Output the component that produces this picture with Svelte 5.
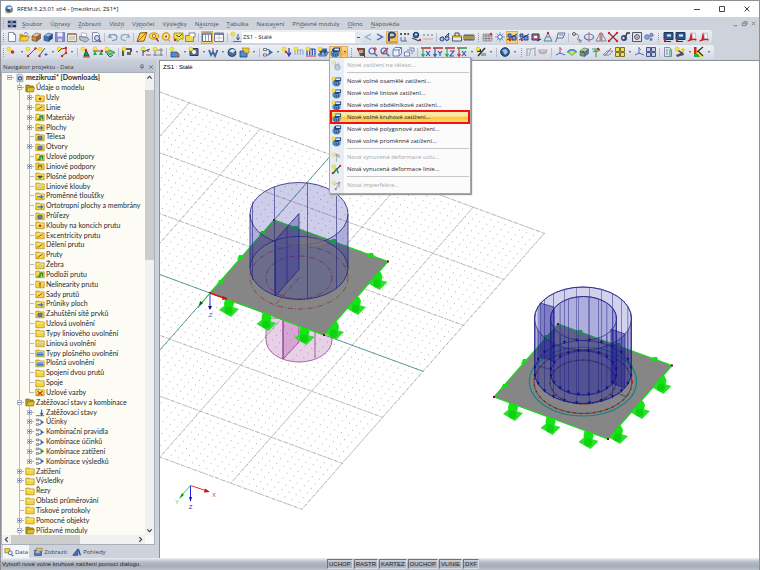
<script>
  // Icon artwork, drawn on a 12 x 12 grid.
  const star = '<circle cx="3" cy="3" r="2" fill="#f6ea3c" stroke="#c9b423" stroke-width=".5"/>';
  const lens = '<circle cx="5" cy="5" r="3" fill="#dfe9fb" stroke="#4a62b8" stroke-width="1.2"/><path d="M7.3 7.3l3 3" stroke="#6a6a80" stroke-width="1.6"/>';
  const red = (x, y) => `<circle cx="${x}" cy="${y}" r="1.2" fill="#d22"/>`;
  const cube = (a, b, c) => `<path d="M2 5l4-3 4.500 1-4 3z" fill="${a}"/><path d="M2 5l4.500 1v4.500L2 9.500z" fill="${b}"/><path d="M6.500 6l4-3v4.500l-4 3z" fill="${c}"/><path d="M2 5l4-3 4.500 1v4.500l-4 3L2 9.500zM2 5l4.500 1v4.500M6.500 6l4-3" fill="none" stroke="#333a55" stroke-width=".5"/>`;
  const load = '<path d="M2 6l1.500-1.500h6L10 6v3l-2 2H4L2 9z" fill="#5b9bd6" stroke="#2d5f9c" stroke-width=".5"/><path d="M3 3.500l2-2h6v4H9L8 6.500H4z" fill="#27477c"/><path d="M5.500 2.600h4.500v1.700H5.500z" fill="#eef3fb"/><path d="M4.200 7v3M6.200 7.500V10.500M8.200 7v3" stroke="#1b3868" stroke-width=".8"/>';
  const sheet = (c) => `<path d="M2.500 1.500h5l2 2v7h-7z" fill="${c}" stroke="#6b7890" stroke-width=".8"/>`;
  const axis = (c1, c2, d) => `<path d="M1 2h10" stroke="${c2}" stroke-width="1.600"/><path d="M3 2v8M1.500 8L3 10.500 4.500 8" stroke="${c1}" stroke-width="1.100" fill="none"/><path d="${d}" stroke="#3450a8" stroke-width="1.100" fill="none"/>`;
  const art = {
    orb: '<circle cx="6" cy="6" r="4.600" fill="#5f7fa8"/><path d="M3 5l3-2 4 1-3 3z" fill="#cfe2f5"/><path d="M3 5l4 2v3.500L3 8z" fill="#2e4c7d"/><path d="M1 9c2 2.500 7 2.500 10-1" stroke="#b8a238" stroke-width="1.200" fill="none"/>',
    flag: '<path d="M1 2h10v8H1z" fill="#27366f"/><path d="M0 6h12M5.500 1v10" stroke="#fff" stroke-width="1.800"/><path d="M0 6h12M5.500 1v10" stroke="#27366f" stroke-width=".7"/>',
    doc: sheet('#fff') + '<path d="M7.500 1.500v2h2" fill="none" stroke="#6b7890" stroke-width=".7"/>',
    open: '<path d="M1.500 3h3l1 1h4v6h-8z" fill="#c9a21c"/><path d="M1.500 10l2-4.500h8L9.500 10z" fill="#f3cf3d" stroke="#a27d10" stroke-width=".6"/><path d="M6 2.500c2-1.500 3-1 4 1" stroke="#4b79b8" fill="none"/>',
    cubeO: cube('#f3c27b', '#d88b2f', '#a8601b'),
    cubeB: cube('#8fb9ec', '#3a74c8', '#1f479a'),
    save: '<path d="M1.500 1.500h9v9h-9z" fill="#8a8ccf" stroke="#6465b0" stroke-width=".7"/><path d="M3.500 1.500h5v4h-5z" fill="#f2f3ff"/><path d="M4 7.500h4v3H4z" fill="#d4d6e8"/>',
    report: '<path d="M1.500 3h9v7.500h-9z" fill="#f2e9d8" stroke="#7b6a58" stroke-width=".8"/><path d="M1.500 2h9v2h-9z" fill="#a58d74"/><path d="M3 6h6M3 8h6" stroke="#a9a297" stroke-width=".7"/>',
    print: '<path d="M4 1.500l5 1.500-1 3-5-1z" fill="#fff" stroke="#8a93a8" stroke-width=".6"/><path d="M1.500 5.500l8 1 1.500 2-3 2.500-6-2z" fill="#b8c0cf" stroke="#5e6a85" stroke-width=".7"/>',
    preview: sheet('#f4f7fc') + '<circle cx="7" cy="7" r="2.500" fill="#cfe0f6" stroke="#3a5fa8"/><path d="M9 9l2 2" stroke="#7a5530" stroke-width="1.500"/>',
    undo: '<path d="M3 3L1.500 6 5 6.500M2 5.800C4 2.500 10 3 10 6.500c0 2-2 3-5 3" fill="none" stroke="#7d93bb" stroke-width="1.100"/>',
    redo: '<path d="M9 3l1.500 3L7 6.500M10 5.800C8 2.500 2 3 2 6.500c0 2 2 3 5 3" fill="none" stroke="#8fa2c4" stroke-width="1.100"/>',
    plate: '<path d="M4 2l7-.5L8 10l-7 .5z" fill="#f1df2b" stroke="#8c5a17" stroke-width="1"/><path d="M2 10l8-8" stroke="#c33" stroke-width=".8"/>',
    eyeY: '<ellipse cx="6" cy="5" rx="5" ry="3.200" fill="#f7e23a" stroke="#a88a18" stroke-width=".8"/><circle cx="6" cy="5" r="1.600" fill="#fff" stroke="#b33" stroke-width=".8"/><path d="M8 7l2.500 3.500" stroke="#a33" stroke-width="1.300"/>',
    ring: '<circle cx="6" cy="5.500" r="3.400" fill="#fff" stroke="#dbb01d" stroke-width="2"/><circle cx="6" cy="5.500" r="1.300" fill="#c44"/><path d="M8 8l2 3" stroke="#b86" stroke-width="1"/>',
    note: '<path d="M2 2h9v6H8l-3 3V8H2z" fill="#f7e23a" stroke="#9b861a" stroke-width=".8"/><path d="M4 4l3 2 3-3" stroke="#35519a" fill="none"/>' + red(3, 9),
    folderOut: '<path d="M1.500 4.500h8v6h-8z" fill="#f5d84a" stroke="#8a7417" stroke-width=".8"/><path d="M5 4V2h6v4h-2" fill="#fff" stroke="#667" stroke-width=".8"/>',
    table: '<path d="M1.500 2h9v8.500h-9z" fill="#f6f8fb" stroke="#5c657b"/><path d="M1.500 2h9v2h-9z" fill="#8692aa"/><path d="M4.500 4v6.500M7.500 4v6.500" stroke="#7d879d" stroke-width=".8"/>',
    tableW: '<path d="M1.500 2h9v8.500h-9z" fill="#fdfdfe" stroke="#6c778e"/><path d="M1.500 2h9v2h-9z" fill="#7583a0"/><path d="M6 4v6.500M1.500 7h9" stroke="#b5bccb" stroke-width=".8"/>',
    stars: star + '<path d="M8 3v5M6.500 6.500L8 9l1.500-2.500" stroke="#324f9a" fill="none"/><path d="M3 10h8v1H3z" fill="#5b6f9e"/>',
    left: '<path d="M9 3L3.500 6 9 9" stroke="#8fa6d8" stroke-width="1.300" fill="none"/>',
    right: '<path d="M3 3l5.500 3L3 9" stroke="#3c5fc0" stroke-width="1.300" fill="none"/>',
    eyeB: '<path d="M3 10V3c0-2 6-2 6 1 0 2-3 2.500-5 2.500" fill="none" stroke="#2d4478" stroke-width="2"/><circle cx="7" cy="4" r="1.300" fill="#9fd0f4"/><path d="M1 11h10" stroke="#a8721a"/>',
    vals: '<path d="M2 2l2 2M4 2L2 4M6 2l2 2M8 2L6 4M9.500 2l1.500 2M11 2L9.500 4" stroke="#333" stroke-width=".8"/><path d="M3 6v4h6M7 6v4" stroke="#5b6f9e" stroke-width="1" fill="none"/>',
    eyeR: '<circle cx="6" cy="4" r="2.800" fill="#3d64a6" stroke="#223b72"/><circle cx="6" cy="3.600" r="1" fill="#dfe9fb"/><path d="M2 7l7 3" stroke="#445" stroke-width="1.300"/>' + red(10, 9),
    valsF: '<path d="M1 3l2 2M3 3L1 5M5 3l2 2M7 3L5 5M9 3l2 2M11 3L9 5" stroke="#99a" stroke-width=".8"/><path d="M1 8h10" stroke="#d99" stroke-width="1"/>',
    glasses: '<path d="M1 7l4-1M6 6l4-4M9 6l1-4" stroke="#334a7c" stroke-width="1"/><circle cx="3" cy="8" r="2" fill="#9fc1ea" stroke="#2b4478"/><circle cx="8" cy="7.500" r="2" fill="#9fc1ea" stroke="#2b4478"/>',
    panelA: '<path d="M1.500 5h9v5h-9z" fill="#e8edf4" stroke="#4c556b"/><path d="M1.500 5h9v1.500h-9z" fill="#c9a21c"/><path d="M4 5V2h4v3" fill="none" stroke="#444"/>',
    panelB: '<path d="M1 4h10v5H1z" fill="#f3dd55" stroke="#4c556b"/><path d="M3 4v5M5 4v5M7 4v5M9 4v5" stroke="#333" stroke-width=".8"/>',
    mesh: '<path d="M1 3h9v7H1z" fill="#c9cdd6" stroke="#777" stroke-width=".6"/><path d="M1 5h9M1 7.500h9M4 3v7M7 3v7" stroke="#777" stroke-width=".7"/>' + red(9, 3),
    snow: '<path d="M6 1v10M1 6h10M2.500 2.500l7 7M9.500 2.500l-7 7" stroke="#7d93cf" stroke-width=".9"/><circle cx="6" cy="6" r="2.200" fill="#fff" stroke="#3c5fc0"/>',
    dim: '<path d="M2 3h3v3H2zM6 5h4v4H6z" fill="#6e98d8" stroke="#1d3c80" stroke-width=".9"/><path d="M1 9l10-6" stroke="#1d3c80"/>' + red(4, 9),
    dimR: '<path d="M2 3h7v6H2z" fill="#dc5a55" stroke="#1d3c80"/><path d="M4 5h3v2H4z" fill="#fff"/><path d="M7 10l4-2" stroke="#1d3c80" stroke-width="1.200"/>',
    tower: '<path d="M6 2L2 10h8zM4 6h4" fill="none" stroke="#5b7f9e" stroke-width="1"/>' + red(6, 2),
    label: '<path d="M4 2h7l-2 5H3zM3 7l-1.500 4" fill="#e9eef7" stroke="#4b5f8e" stroke-width=".9"/><path d="M5 4h4" stroke="#4b5f8e" stroke-width=".8"/>',
    chain: '<circle cx="3" cy="3" r="1.500" fill="none" stroke="#556"/><path d="M4 3c4 0 4 2 3 4s1 3 3 3M8 8l2.500 2-2 1.500" fill="none" stroke="#667" stroke-width=".9"/>',
    rotate: '<ellipse cx="6" cy="6" rx="4.500" ry="3" fill="none" stroke="#4a78c8" stroke-width="1.200"/><path d="M6 1v10" stroke="#c66" stroke-width="1"/>',
    mirror: '<path d="M5 2v8H1zM7 2v8h4z" fill="#e6e9f2" stroke="#7a6a78" stroke-width=".8"/><path d="M6 1v10" stroke="#c33" stroke-width=".7"/>',
    cross: '<path d="M2 2l8 8M10 2l-8 8" stroke="#8a2d35" stroke-width="1.200"/>' + red(2, 2) + red(10, 2) + red(2, 10) + red(10, 10),
    tag: '<circle cx="5" cy="7" r="3" fill="#2d4478"/><circle cx="4.500" cy="7" r="1.200" fill="#d6e2f4"/><path d="M7 5l1-3h3" stroke="#333" fill="none" stroke-width="1.300"/>',
    target: '<path d="M1.500 1.500h9v9h-9z" fill="#dfe5ee" stroke="#4c556b"/><circle cx="6" cy="6" r="2.300" fill="#fff" stroke="#333"/><circle cx="6" cy="6" r=".8" fill="#333"/>',
    spheres: '<circle cx="4" cy="6" r="2.300" fill="#8fa8d8" stroke="#3d568c" stroke-width=".7"/><circle cx="8.500" cy="4" r="1.700" fill="#8fa8d8" stroke="#3d568c" stroke-width=".7"/><circle cx="8" cy="8.500" r="1.400" fill="#5b78b4"/>',
    monitor: '<path d="M2 1.500h9v7H2z" fill="#2b5796" stroke="#1b3461"/><path d="M5 3.500h4v2H5z" fill="#e7effa"/><path d="M2 10.500h7" stroke="#1b3461"/>' + red(3, 9),
    tools: '<path d="M5 1l2 7-4 2z" fill="#c62222"/><path d="M6.500 2h3v8H6z" fill="#f4f4f7" stroke="#99a" stroke-width=".5"/><path d="M1.500 10c3-1 6-3 9-1" stroke="#c62222" stroke-width="1.300" fill="none"/>',
    node: star + '<circle cx="6.500" cy="6" r="1.800" fill="#d22"/>',
    line: star + '<path d="M3 10l7-7" stroke="#555" stroke-width="1"/>' + red(3, 10) + red(10.5, 2.5),
    line2: star + '<path d="M2 10l6-8" stroke="#555" stroke-width="1"/>' + red(2.5, 10) + '<path d="M9 7v3M7.500 8.500h3" stroke="#3c5fc0"/>',
    poly: star + '<path d="M2 6l3-3 5-1v5l-4 3" stroke="#a22" fill="none" stroke-width="1"/>' + red(10, 2) + red(10, 7) + red(6, 10),
    supA: star + '<path d="M6 4l3 6H4z" fill="#18a04c" stroke="#0b5e2a"/><path d="M3 11h7" stroke="#c33"/>' + red(6, 4),
    supB: star + '<path d="M1 5h10" stroke="#944"/><path d="M3 5l2 4H1zM9 5l2 4H7z" fill="#22a852"/>' + red(10, 5),
    supC: '<path d="M1 6l5-2 5 2.500-5 2.500z" fill="#64c890" stroke="#18703d" stroke-width=".7"/><path d="M3 8l3 3 3-2" stroke="#18703d" fill="none"/>' + star,
    beam: '<path d="M2 10V3h8v3" fill="none" stroke="#333" stroke-width="1.600"/>' + star + '<path d="M6 6h4v3H6z" fill="#666"/>',
    beamV: star + '<path d="M3 10V4M3 6l7-3M8 3v3" fill="none" stroke="#446" stroke-width="1"/><path d="M6 9h5" stroke="#a55"/>',
    frame: '<path d="M3 2v8M1 4h10M9 2v8M1 9h10" stroke="#778" stroke-width=".9"/>' + star,
    surf: '<path d="M2 6h6l2 2v3H2z" fill="#4b8fd0" stroke="#1d3c80" stroke-width=".7"/><circle cx="8" cy="9" r="1.500" fill="#c66a30"/>' + star,
    hole: '<path d="M2 2.500h8v7H2z" fill="#5e6f92" stroke="#2b3a5c"/><circle cx="6" cy="6" r="2" fill="#f3f6fb"/>' + star,
    solid: '<path d="M2 4l2 5 2-3 2 4 2.500-6" stroke="#3d64a6" stroke-width="1.800" fill="none"/><path d="M6 2v4" stroke="#b44"/>',
    globe: '<circle cx="6" cy="6.500" r="4" fill="#4b6f9e" stroke="#23406c"/><path d="M3 5l3-2 4 1-3 3z" fill="#dce7f5"/>',
    boxY: '<path d="M2 5h7v6H2z" fill="#4b8fd0" stroke="#1d3c80" stroke-width=".8"/><path d="M4 2h7v5H7z" fill="#e6ca42" stroke="#8a7417" stroke-width=".6"/>',
    combo: '<path d="M1.500 2.500h3v2h-3zM1.500 8h3v2h-3z" fill="#fff" stroke="#556" stroke-width=".8"/><path d="M4.500 3.500H7v2M4.500 9H7V7" fill="none" stroke="#556" stroke-width=".8"/><path d="M7 3.500L11 6.200 7 9z" fill="#2f6fd0"/>',
    nodeLoad: star + '<path d="M8 2v7M6 6.500L8 10l2-3.500" stroke="#2b3fb0" fill="none" stroke-width="1.200"/>' + red(5, 6),
    lineLoad: '<path d="M2 4h8M2 4v5M4.700 4v5M7.300 4v5M10 4v5" stroke="#9aa8d4" stroke-width="1.100" fill="none"/>' + star,
    memLoad: '<path d="M2 3h8M2 3v6M4.700 3v6M7.300 3v6M10 3v6" stroke="#2b3fb0" stroke-width="1.200" fill="none"/><path d="M1 10h10" stroke="#c33"/>' + star,
    surfLoad: '<path d="M2 2.500h8V6H2z" fill="#46699c"/><path d="M1.500 8l3-2h7l-2.500 4h-7z" fill="#8fb4e0" stroke="#1d3c80" stroke-width=".7"/><path d="M4 4v5M8 4v5" stroke="#15264e"/>' + star,
    load: load + star,
    loadPlain: load,
    bodyFaint: '<g opacity=".45"><circle cx="7" cy="8" r="3" fill="#8fa8d8" stroke="#3d568c"/><path d="M5 2v5M8 3v4" stroke="#556" stroke-width="1"/>' + star + '</g>',
    defNode: '<g opacity=".6"><path d="M6 4v7M6 4l4 2" stroke="#7a8" stroke-width="1.200"/><circle cx="8" cy="4" r="1.600" fill="#6a9"/>' + star + red(6, 3) + '</g>',
    defLine: '<path d="M2 10l8-8" stroke="#333" stroke-width="1.300"/><path d="M6 5l2 5M6 5l-3 5" stroke="#1c8a3c" stroke-width="1.400"/>' + red(2, 10) + red(10, 2) + star,
    imp: '<g opacity=".6"><path d="M3 5l6-2-4 8M9 3v5" stroke="#889" stroke-width="1.200" fill="none"/>' + red(9, 3) + red(5, 10) + star + '</g>',
    hand: '<path d="M2 2h8v8H5z" fill="#5e564e"/><path d="M4 4h4v3H4z" fill="#c8a27e"/>' + red(3, 3) + '<path d="M7 7l3 4" stroke="#333"/>',
    zoomIn: lens + '<path d="M8 1v4M6 3h4" stroke="#c33" stroke-width="1"/>',
    zoomAll: lens + '<path d="M3 8l6-6" stroke="#c33" stroke-width="1.400"/>',
    wire: '<path d="M2 4h6v6H2zM2 4l2-2.500h6.500V7.500L8 10M8 4l2.500-2.500" fill="#eef2fa" stroke="#5b6fa5" stroke-width=".9"/>',
    layers: '<path d="M1.500 6h5v4h-5z" fill="#eef2fa" stroke="#6a7cae" stroke-width=".9"/><path d="M4 4h5v4M6 2h5v4" fill="none" stroke="#6a7cae" stroke-width=".9"/>',
    ax: axis('#2fa34a', '#c33', 'M6 5l4 5M10 5l-4 5'),
    ay: axis('#3450a8', '#c33', 'M6 5l2 2.500L10 5M8 7.500V10'),
    az: axis('#2fa34a', '#c33', 'M6 5h4l-4 5h4'),
    axm: axis('#c33', '#2fa34a', 'M6 5l4 5M10 5l-4 5'),
    views: '<path d="M2 3h4v3H2z" fill="#333"/><path d="M3 10l7-8" stroke="#333" stroke-width="1.500"/><path d="M6 7h5v3H6z" fill="#8a9"/>' + star,
    world: '<circle cx="6" cy="6" r="4.300" fill="#2d5e96" stroke="#17365f"/><path d="M3 4l4-1 2 3-3 3z" fill="#9fc3e6"/>',
    shapeA: '<path d="M2 10V3h5M7 3l3-1v8" fill="none" stroke="#a9b" stroke-width="1.100"/><path d="M4 10L6 3" stroke="#8b9"/>',
    shapeB: '<path d="M1 4h9M2 4c0 5 7 5 8 0" fill="none" stroke="#b9a0a0" stroke-width="1.200"/><path d="M3 6h6" stroke="#99a"/>',
    defl: '<path d="M6 1v7M2 9l4-2 5 2" stroke="#5a78c8" fill="none" stroke-width="1.100"/><path d="M6 2l2 2" stroke="#c55"/>',
    fan: '<path d="M1 6c2-4 8-4 10 0L6 10z" fill="#5ec65e"/><path d="M3 6c1-2 5-2 6 0L6 9z" fill="#f0d83a"/><path d="M1 6c2-4 8-4 10 0l-1 1C8 4 4 4 2 7z" fill="#4a8be0"/>',
    solidC: cube('#a6e07a', '#4fb06a', '#3c7fbf') + red(5, 6),
    tree: '<path d="M6 11V4M6 4L3 6M6 6l4-2M2 3h8" stroke="#4aa05a" fill="none" stroke-width="1.200"/>' + red(8, 3),
    slice: '<path d="M1 9l4-4h6L7 9z" fill="#dbe4f6" stroke="#6a7cae" stroke-width=".8"/><path d="M3 10l6-8" stroke="#a66"/>',
    four: '<path d="M1.500 1.500h4v4h-4zM6.500 1.500h4v4h-4zM1.500 6.500h4v4h-4zM6.500 6.500h4v4h-4z" fill="#f2df4e" stroke="#6b6420" stroke-width=".9"/>',
    fourB: '<path d="M1.500 1.500h4v4h-4zM6.500 1.500h4v4h-4zM1.500 6.500h4v4h-4zM6.500 6.500h4v4h-4z" fill="#c3cef0" stroke="#3c4678" stroke-width=".9"/>',
    listC: sheet('#dfe5ee') + '<path d="M8 3v7" stroke="#7c9" stroke-width="2"/><path d="M4 4h2M4 6h2M4 8h2" stroke="#88a"/>',
    wand: '<path d="M2 9l7-3 1 3-7 2z" fill="#555"/><path d="M2 3l6 4" stroke="#333" stroke-width="1.300"/><circle cx="9" cy="4" r="1.800" fill="#e7c832"/>' + star,
    color: '<path d="M1 1v10h10z" fill="#f2e52e"/><path d="M1 1h2.500v7H1z" fill="#d22"/><path d="M1 8h4l2 3H1z" fill="#29a84c"/><path d="M4 6l6-5M5 5l5 5" stroke="#333" stroke-width="1.200"/>',
    folder: '<path d="M1 2.500h4l1 1h5v7H1z" fill="#f5d63c" stroke="#a58318" stroke-width=".8"/><path d="M1.500 5h9" stroke="#fdf2a0" stroke-width="1"/>',
    folderO: '<path d="M1 2.500h4l1 1h4v7H1z" fill="#b0951f" stroke="#7a6614" stroke-width=".8"/><path d="M2 10.500l1.500-5h8l-1.500 5z" fill="#dfbd30" stroke="#8c7416" stroke-width=".7"/>',
    lc: '<path d="M1 10h10v1H1z" fill="#4a5a9a"/><path d="M8 3v7M6.500 7L8 10l1.500-3" stroke="#2b4fa8" fill="none" stroke-width="1.200"/>',
    comboG: '<path d="M1.500 2.500h3v2h-3zM1.500 8h3v2h-3z" fill="#fff" stroke="#556" stroke-width=".8"/><path d="M4.500 3.500H7v2M4.500 9H7V7" fill="none" stroke="#556" stroke-width=".8"/><path d="M7 3.500L11 6.200 7 9z" fill="#1c9a2c"/>',
    project: sheet('#e6edf7') + '<circle cx="6" cy="6.500" r="2.800" fill="#35619c"/><circle cx="6" cy="6.500" r="1" fill="#fff"/>',
    tabData: '<path d="M1 2h6v5H1z" fill="#f3d63c" stroke="#8a7417" stroke-width=".8"/><circle cx="7.500" cy="7" r="2.300" fill="#e6eefb" stroke="#3a5fa8"/><path d="M9 9l2 2" stroke="#3a5fa8" stroke-width="1.300"/>',
    tabShow: '<path d="M2 4h8v6H2z" fill="#5b84bf" stroke="#29487c"/><path d="M4 1.500h7V5H4z" fill="#dfc08a" stroke="#8a5a2a" stroke-width=".6"/><path d="M3 6h5" stroke="#fff"/>',
    tabView: '<path d="M1 10l6-8v8z" fill="#3b6fd0" stroke="#1d3c80" stroke-width=".8"/><path d="M8 3l2 7" stroke="#2b3f80" stroke-width="1.500"/>'
  };
  // Small marks drawn on the front of a folder.
  const marks = {
    r: '<circle cx="6" cy="7" r="1.500" fill="#c22"/>', l: '<path d="M3 9l6-4" stroke="#b5472a" stroke-width="1.200"/>',
    g: '<path d="M3 9h3V5h3v4" stroke="#1f8a3c" fill="none" stroke-width="1.700"/>', b: '<path d="M3 7h6M7 5l2 2-2 2" stroke="#2f6fd0" fill="none" stroke-width="1.300"/>',
    s: '<path d="M3.500 5h5v4h-5z" fill="#5d7f9f" stroke="#36506c" stroke-width=".7"/>', n: '',
    d: '<path d="M4 9V6h4v3M3 5h6" stroke="#6b5a10" fill="none" stroke-width="1.100"/>', w: '<circle cx="6" cy="7" r="1.500" fill="#fff" stroke="#8090a8" stroke-width=".7"/>',
    t: '<path d="M2 5h8v5H2z" fill="#6ea0d8"/><path d="M2 8h8" stroke="#3a68a8"/>', x: '<path d="M3 5l6 5M9 5l-6 5" stroke="#a83018" stroke-width="1.300"/>',
    v: '<path d="M6 4.500V10M4.500 5h3" stroke="#b5472a" stroke-width="1.300"/>', p: '<path d="M3 6l3 3 3-3z" fill="#1f6e6a" stroke="#123" stroke-width=".6"/>'
  };

  const menus = [['', 'S', 'oubor'], ['Ú', 'p', 'ravy'], ['', 'Z', 'obrazit'], ['Vlož', 'i', 't'], ['Vý', 'p', 'očet'], ['Výsle', 'd', 'ky'], ['N', 'á', 'stroje'], ['', 'T', 'abulka'], ['Nasta', 'v', 'ení'], ['Při', 'd', 'avné moduly'], ['', 'O', 'kno'], ['', 'N', 'ápověda']];

  // '|' separator, '#' drag handle, 'v' drop arrow, '*' before a name marks a pressed button.
  const bar1a = '# doc open cubeO cubeB save report print preview | undo redo | plate eyeY ring note folderOut | *table tableW | stars'.split(' ');
  const bar1b = 'left right *eyeB vals eyeR valsF | glasses panelA panelB # mesh snow *dim dim dimR tower label | chain rotate mirror cross tag target spheres # monitor monitor tools tools'.split(' ');
  const bar2 = '# node v line line2 v poly v | supA supB supC | beam v beamV frame | surf v hole v solid v globe boxY v | combo v nodeLoad lineLoad memLoad surfLoad *loadPlain *v # hand zoomIn zoomAll wire layers | ax ay az axm v views v | world v # shapeA shapeB | defl fan solidC tree slice four v defl fourB | listC wand v color v'.split(' ');

  const popup = [
    ['bodyFaint', 'Nové zatížení na těleso...', 0], null,
    ['load', 'Nové volné osamělé zatížení...', 1], ['load', 'Nové volné liniové zatížení...', 1],
    ['load', 'Nové volné obdélníkové zatížení...', 1], ['load', 'Nové volné kruhové zatížení...', 2],
    ['loadPlain', 'Nové volné polygonové zatížení...', 1], ['load', 'Nové volné proměnné zatížení...', 1], null,
    ['defNode', 'Nová vynucená deformace uzlu...', 0], ['defLine', 'Nová vynucená deformace linie...', 1], null,
    ['imp', 'Nová imperfekce...', 0]
  ];

  // Each entry: folder mark, '+' when it can be opened, then the text.
  const model = 'r+Uzly|l+Linie|g+Materiály|b+Plochy|s-Tělesa|s+Otvory|g-Uzlové podpory|d+Liniové podpory|p-Plošné podpory|w-Liniové klouby|b-Proměnné tloušťky|b-Ortotropní plochy a membrány|s-Průřezy|r-Klouby na koncích prutu|l-Excentricity prutu|l-Dělení prutu|l-Pruty|w-Žebra|g-Podloží prutu|v-Nelinearity prutu|l-Sady prutů|b-Průniky ploch|s-Zahuštění sítě prvků|n-Uzlová uvolnění|n-Typy liniového uvolnění|w-Liniová uvolnění|t-Typy plošného uvolnění|t-Plošná uvolnění|n-Spojení dvou prutů|n-Spoje|x-Uzlové vazby';
  const rows = [
    [0, 'o', art.project, 'mezikruzi* [Downloads]'],
    [1, 'o', art.folderO, 'Údaje o modelu'],
    ...model.split('|').map((s) => [2, s[1] === '+' ? 'c' : '', art.folder + marks[s[0]], s.slice(2)]),
    [1, 'o', art.folderO, 'Zatěžovací stavy a kombinace'],
    [2, 'c', art.lc, 'Zatěžovací stavy'], [2, 'c', art.combo, 'Účinky'], [2, 'c', art.combo, 'Kombinační pravidla'],
    [2, 'c', art.combo, 'Kombinace účinků'], [2, 'c', art.comboG, 'Kombinace zatížení'], [2, 'c', art.combo, 'Kombinace výsledků'],
    [1, 'c', art.folder, 'Zatížení'], [1, 'c', art.folder, 'Výsledky'], [1, '', art.folder, 'Řezy'],
    [1, '', art.folder, 'Oblasti průměrování'], [1, '', art.folder, 'Tiskové protokoly'],
    [1, 'c', art.folder, 'Pomocné objekty'], [1, 'o', art.folderO, 'Přídavné moduly']
  ];
  const isLast = (i) => rows[i][0] === 2 && rows[i + 1][0] !== 2;

  // Work-plane grid: one major cell is five metres in each direction.
  const O = [210, 293], U = [71, 26.1], V = [-40.4, 46];
  const at = (u, v) => [O[0] + U[0] * u + V[0] * v, O[1] + U[1] * u + V[1] * v];
  const seg = (a, b) => `M${at(...a)}L${at(...b)}`;
  let major = '', dots = '';
  for (let v = -3; v <= 3; v++) if (v) major += seg([-6, v], [3, v]);
  for (let u = -6; u <= 3; u++) if (u) major += seg([u, -3], [u, 3]);
  for (let i = -60; i <= 30; i++) for (let j = -30; j <= 30; j++) {
    const [x, y] = at(i / 10, j / 10);
    if (x > 160 && y > 85) dots += `M${x.toFixed(1)} ${y.toFixed(1)}h.8`;
  }
  const feet1 = [[229, 308], [266.5, 322], [304.5, 336], [334, 331], [356, 306], [377.5, 281]];
  const feet2 = feet1.map(([x, y]) => [x + 284, y + 104]);
  const bumps = [[262, 233], [240, 257], [220, 282], [295, 228], [333, 241], [370, 255]];
  const ring = (cx, cy, rx, ry, n) => Array.from({ length: n }, (_, i) => {
    const a = (i + 0.5) * 2 * Math.PI / n;
    return [cx + rx * Math.cos(a), cy + ry * Math.sin(a)];
  });
  const outer = ring(583, 372, 48.5, 31.5, 24), inner = ring(583.5, 373, 33, 22, 20);
</script>

{#snippet icon(body)}
  <svg class="icon" viewBox="0 0 12 12" aria-hidden="true">{@html body}</svg>
{/snippet}

{#snippet tools(list)}
  {#each list as t}
    {#if t === '|'}<span class="sep"></span>
    {:else if t === '#'}<span class="handle"></span>
    {:else if t === 'v' || t === '*v'}<button class="drop" class:on={t[0] === '*'} aria-label="Další možnosti"><i></i></button>
    {:else}
      {@const name = t.replace('*', '')}
      <button class="tool" class:on={t[0] === '*'} aria-label={name}>{@render icon(art[name])}</button>
    {/if}
  {/each}
{/snippet}

{#snippet foot(x, y)}
  <g transform="translate({x} {y})">
    <path d="M-10 2l6-5 14 4-8 8z" fill="#2fdc2f" />
    <path d="M-4-9h7l2 4-1 5h-8l-1-4z" fill="#14e414" />
    <circle cx="-.5" cy="2.500" r="4" fill="#0cd40c" />
  </g>
{/snippet}

{#snippet slab()}
  <path d="M210 293L274 220 388 261.500 324 335z" fill="#868686" stroke="#18dc18" stroke-width="1.200" />
  {#each bumps as [x, y]}<path d="M{x - 3} {y + 3}l2-5h4l1 3z" fill="#18e018" />{/each}
  {#each [[210, 293], [274, 220], [388, 261.5], [324, 335]] as [x, y]}<rect x={x - 1} y={y - 1} width="2" height="2" fill="#7a1010" />{/each}
{/snippet}

<div class="app">
  <header class="title">
    {@render icon(art.orb)}
    <h1>RFEM 5.23.01 x64 - [mezikruzi, ZS1*]</h1>
    <div class="win">
      <button aria-label="Minimalizovat"><svg viewBox="0 0 8 8"><path d="M1 4.500h6" /></svg></button>
      <button aria-label="Maximalizovat"><svg viewBox="0 0 8 8"><path d="M1.500 1.500h5v5h-5z" /></svg></button>
      <button aria-label="Zavřít"><svg viewBox="0 0 8 8"><path d="M1.500 1.500l5 5M6.500 1.500l-5 5" /></svg></button>
    </div>
  </header>

  <nav class="menubar">
    <span class="grip"></span>
    {@render icon(art.flag)}
    {#each menus as [pre, u, rest]}<button>{pre}<u>{u}</u>{rest}</button>{/each}
    <div class="mdi">
      <button aria-label="Minimalizovat okno"><svg viewBox="0 0 8 8"><path d="M2 6.500h4" /></svg></button>
      <button aria-label="Obnovit okno"><svg viewBox="0 0 8 8"><path d="M1.500 3.500h4v3h-4zM3 3V2h4v3H6" /></svg></button>
      <button aria-label="Zavřít okno"><svg viewBox="0 0 8 8"><path d="M2 2l4 4M6 2L2 6" /></svg></button>
    </div>
  </nav>

  <div class="bars">
    <div class="bar">
      {@render tools(bar1a)}
      <select aria-label="Zatěžovací stav"><option>ZS1 - Stálé</option></select>
      {@render tools(bar1b)}
    </div>
    <div class="bar">{@render tools(bar2)}</div>
  </div>

  <div class="work">
    <aside>
      <div class="dock">
        <h2>Navigátor projektu - Data</h2>
        <button aria-label="Připnout"><svg viewBox="0 0 8 8"><path d="M2.500 1h3v3.500h-3zM1.500 4.500h5M4 4.500V7" /></svg></button>
        <button aria-label="Zavřít panel"><svg viewBox="0 0 8 8"><path d="M1.500 1.500l5 5M6.500 1.500l-5 5" /></svg></button>
      </div>
      <div class="treebox">
        <div class="treetop">
          <ul class="tree">
            {#each rows as [level, exp, body, text], i}
              <li class:root={level === 0}>
                {#if level > 0}<span class="cell"></span>{/if}
                {#if level > 1}<span class="cell vert"></span>{/if}
                <span class="cell stub" class:vert={level > 0 && !isLast(i)} class:half={isLast(i)}>
                  {#if exp}<span class="box" class:plus={exp === 'c'}></span>{/if}
                </span>
                {@render icon(body)}
                <span>{text}</span>
              </li>
            {/each}
          </ul>
          <div class="vscroll">
            <svg viewBox="0 0 8 8"><path d="M2 5l2-2 2 2" /></svg>
            <div class="track"><div class="thumb"></div></div>
            <svg viewBox="0 0 8 8"><path d="M2 3l2 2 2-2" /></svg>
          </div>
        </div>
        <div class="hscroll">
          <svg viewBox="0 0 8 8"><path d="M5 2L3 4l2 2" /></svg>
          <div class="track"><div class="thumb"></div></div>
          <svg viewBox="0 0 8 8"><path d="M3 2l2 2-2 2" /></svg>
        </div>
      </div>
      <div class="tabs">
        <button class="cur">{@render icon(art.tabData)}Data</button>
        <button>{@render icon(art.tabShow)}Zobrazit</button>
        <button>{@render icon(art.tabView)}Pohledy</button>
      </div>
    </aside>

    <main>
      <svg class="scene" viewBox="160 61 599 497" preserveAspectRatio="xMinYMin slice" role="img" aria-label="Model se zatížením">
        <path d={dots} stroke="#8c8c8c" stroke-width=".8" />
        <path d={major} stroke="#a4a4a4" stroke-width=".7" stroke-dasharray="5 1" />
        <path d="{seg([-3, 0], [3, 0])}{seg([0, -3], [0, 3])}" stroke="#3f9090" stroke-width=".9" />

        <g stroke="#8a2a8a" stroke-width=".7">
          <path d="M266 318v22a33 22 0 0 0 66 0v-22z" fill="#a03a9a" fill-opacity=".24" />
          <path d="M283 318h16v24l-16 17z" fill="#b040a8" fill-opacity=".3" />
          <path d="M283 318v41M315 318v40" fill="none" />
        </g>
        {#each feet1 as [x, y]}{@render foot(x, y)}{/each}
        {@render slab()}
        <g fill="none" stroke="#8c3434" stroke-width=".8" stroke-dasharray="5 2 1 2">
          <ellipse cx="299" cy="277.500" rx="49" ry="31.500" />
          <ellipse cx="299" cy="277.500" rx="33" ry="21.500" />
          <path d="M299 277.500L276 304" />
        </g>
        <g stroke="#23237c" stroke-width=".8">
          <path d="M250 214a49 31.500 0 0 0 98 0v54a49 31.500 0 0 1-98 0z" fill="#2020a0" fill-opacity=".2" stroke="none" />
          <path d="M250 214a49 31.500 0 0 0 98 0v54a49 31.500 0 0 0-98 0z" fill="#2020a0" fill-opacity=".2" stroke="none" />
          <path d="M250 268a49 31.500 0 0 1 98 0a49 31.500 0 0 1-98 0z" fill="#2020a0" fill-opacity=".06" />
          <path d="M250 214v54M348 214v54" fill="none" />
          <ellipse cx="299" cy="214" rx="49" ry="31.500" fill="#2020a0" fill-opacity=".22" />
          <path d="M299 237c12 0 22 2 29 5-8 4-18 5-29 5s-18-1-27-4c8-5 17-6 27-6z" fill="#85867a" fill-opacity=".6" stroke="none" />
          <path d="M299 213.500v56L275.500 296v-56z" fill="#2020a0" fill-opacity=".33" />
          <path d="M252.500 202v78M274.500 187v109M287 228v55M307.500 183v116M336.500 196v93" fill="none" stroke-width=".6" />
        </g>
        <g fill="none">
          <path d="M210 293l17 6" stroke="#e81010" stroke-width="1.500" />
          <path d="M210 294v15" stroke="#5050e0" stroke-width="1.200" />
          <path d="M210 293l-12 15" stroke="#10e010" stroke-width="1" />
          <path d="M223 296l5 3-6 1z" fill="#c01010" /><path d="M208 306h4l-2 4z" fill="#101080" /><path d="M200 301l3 2-4 3z" fill="#085a08" />
        </g>

        {#each feet2 as [x, y]}{@render foot(x, y)}{/each}
        <g transform="translate(284 104)">{@render slab()}</g>
        <ellipse cx="583" cy="381.500" rx="53.500" ry="34.500" fill="none" stroke="#108484" stroke-width="1.200" />
        <g fill="none" stroke="#333" stroke-width=".7">
          <ellipse cx="583" cy="382" rx="49" ry="31.500" /><ellipse cx="583" cy="382" rx="33" ry="22" />
          <path d="M540 366l14 5M617 393l10 4" />
        </g>
        <g fill="none" stroke="#a01414" stroke-width="1.500" stroke-dasharray="1.500 5">
          <ellipse cx="583" cy="382" rx="49" ry="31.500" /><ellipse cx="583" cy="382" rx="33" ry="22" />
        </g>
        <g stroke="#202088" stroke-width=".7">
          <path d="M534.500 318.500a48.500 31.500 0 0 1 97 0V372a48.500 31.500 0 0 1-97 0z" fill="#2020a0" fill-opacity=".2" />
          <path d="M534.500 318.500a48.500 31.500 0 0 0 97 0V372a48.500 31.500 0 0 1-97 0z" fill="#2020a0" fill-opacity=".2" stroke="none" />
          <path d="M550.500 318.500a33 22 0 0 1 66 0V373a33 22 0 0 1-66 0z" fill="#2020a0" fill-opacity=".2" />
          <ellipse cx="583" cy="318.500" rx="48.500" ry="31.500" fill="none" />
          <ellipse cx="583" cy="372" rx="48.500" ry="31.500" fill="none" />
          <ellipse cx="583.500" cy="318.500" rx="33" ry="22" fill="none" />
          <ellipse cx="583.500" cy="373" rx="33" ry="22" fill="none" />
          <path d="M540 303l14 4v54l-14-4zM611 329l14 5v54l-14-5z" fill="#181890" fill-opacity=".45" />
          {#each [...outer, ...inner] as [x, y]}
            <path d="M{x} {y - 53.5}V{y}" stroke-width=".6" opacity=".8" />
            <path d="M{x - 1.5} {y - 2}h3l-1.500 3.500z" fill="#10108c" stroke="none" />
          {/each}
        </g>

        <g fill="none" stroke-width="1">
          <path d="M190.500 485.500l15 5" stroke="#f03030" /><path d="M190.500 486v13" stroke="#2020f0" /><path d="M190.500 485.500l-9 10" stroke="#20e020" />
          <path d="M205 488.500l5 3.500-6 .5z" fill="#c01010" /><path d="M189 497h3l-1.500 5z" fill="#1010a0" /><path d="M182 493l2 2-5 4z" fill="#10a010" />
        </g>
        <g class="axis" text-anchor="middle">
          <text x="234" y="304" fill="#e06050">X</text><text x="210.500" y="317" fill="#5050e0">Z</text>
          <text x="214" y="497" fill="#f04040">X</text><text x="177" y="504" fill="#30e030">Y</text><text x="190.500" y="509" fill="#3030f0">Z</text>
        </g>
      </svg>
      <p class="case">ZS1 : Stálé</p>
      <div class="popup" role="menu">
        {#each popup as p}
          {#if p}
            <button role="menuitem" class:hot={p[2] === 2} disabled={p[2] === 0}>{@render icon(art[p[0]])}<span>{p[1]}</span></button>
          {:else}<div class="rule"></div>{/if}
        {/each}
      </div>
    </main>
  </div>

  <footer>
    <p>Vytvoří nové volné kruhové zatížení pomocí dialogu.</p>
    <div class="cells">
      {#each ['UCHOP', 'RASTR', 'KARTEZ', 'OUCHOP', 'VLINIE', 'DXF'] as c}<button>{c}</button>{/each}
    </div>
  </footer>
</div>

<style>
  :global(body) { margin: 0; overflow: hidden; }
  .app { box-sizing: border-box; height: 100vh; display: flex; flex-direction: column; background: #cdd2db; border: 1px solid #8e9095; border-bottom: 0; font: 6px/10px "Open Sans", sans-serif; color: #26282c; }
  button { margin: 0; padding: 0; border: 0; background: none; font: inherit; color: inherit; display: flex; align-items: center; justify-content: center; white-space: nowrap; }
  p, h1, h2, ul { margin: 0; padding: 0; font: inherit; }
  .icon { width: 10px; height: 10px; flex: none; }
  button svg { fill: none; stroke: #444; }
  button .icon { stroke: none; }

  .title { display: flex; align-items: center; height: 16px; background: #fff; padding-left: 3px; gap: 3px; flex: none; }
  .title h1 { flex: 1; color: #111; }
  .win { display: flex; }
  .win button { width: 25px; height: 16px; }
  .win svg { width: 8px; height: 8px; stroke-width: 1; }

  .menubar { display: flex; align-items: center; height: 13px; padding-left: 2px; gap: 8px; color: #4c515b; flex: none; }
  .menubar .icon { margin-left: -6px; margin-right: -3px; }
  .grip { width: 1px; height: 9px; border-left: 1px dotted #9aa0ab; }
  .mdi { margin-left: auto; display: flex; padding-right: 1px; }
  .mdi button { width: 9px; }
  .mdi svg { width: 7px; height: 7px; stroke-width: 1; stroke: #777; }
  u { text-underline-offset: 1px; text-decoration-thickness: 1px; text-decoration-color: #9296a0; }

  .bars { display: flex; flex-direction: column; align-items: flex-start; gap: 1px; flex: none; padding-bottom: 1px; }
  .bar { display: flex; align-items: center; height: 14px; border-radius: 3px; padding-right: 2px; background: linear-gradient(#eef1f6, #dfe3eb 55%, #d3d9e3); }
  .tool { width: 12px; height: 13px; }
  .tool .icon { width: 12px; height: 12px; }
  .drop { width: 7px; height: 13px; }
  .drop i { border: 1px solid transparent; border-top: 2px solid #555; border-bottom: 0; }
  .on { background: linear-gradient(#fbdca0, #fbb94c 60%, #fde08a); box-shadow: inset 0 0 0 1px #dfae5c; }
  .sep { width: 1px; height: 9px; margin: 0 2px; background: #b9bfca; }
  .handle { width: 1px; height: 9px; margin: 0 2px 0 3px; border-left: 1px dotted #8f96a3; }
  .bar .handle:first-child { margin: 0 1px 0 2px; }
  select { appearance: none; box-sizing: border-box; width: 120px; height: 11px; margin: 0; padding: 0 8px 0 1px; border: 0; border-radius: 0; font: inherit; color: #222; background: linear-gradient(#555, #555) right 2px center / 3px 1px no-repeat, linear-gradient(90deg, #e2e6ed, #e2e6ed) right / 7px 100% no-repeat, #fff; }

  .work { flex: 1; min-height: 0; display: flex; gap: 3px; }
  aside { width: 155px; flex: none; display: flex; flex-direction: column; min-height: 0; }
  .dock { display: flex; align-items: center; height: 11px; padding: 1px 2px 0; gap: 3px; background: linear-gradient(#c9d0da, #b9c1ce); color: #32363e; }
  .dock h2 { flex: 1; }
  .dock svg { width: 6px; height: 6px; stroke: #667; }
  .treebox { flex: 1; min-height: 0; display: flex; flex-direction: column; border: 1px solid #a9b0bc; background: #fcfcf5; margin-right: 1px; }
  .treetop { flex: 1; min-height: 0; display: flex; }
  .tree { flex: 1; min-width: 0; list-style: none; display: flex; flex-direction: column; overflow: hidden; padding-left: 2px; font: 7px/9px Lato, "Open Sans", sans-serif; }
  .tree li { flex: 1; min-height: 0; display: flex; align-items: center; white-space: nowrap; }
  .tree li > span:last-child { padding-left: 1px; }
  .tree .icon { margin-left: 1px; }
  .root { font-weight: 700; }
  .cell { width: 10px; align-self: stretch; flex: none; display: flex; align-items: center; justify-content: center; background-repeat: no-repeat; }
  .vert { background-image: linear-gradient(#b9b9b9, #b9b9b9); background-size: 1px 100%; background-position: 5px 0; }
  .stub { background-image: linear-gradient(#b9b9b9, #b9b9b9); background-size: 5px 1px; background-position: 100% 50%; }
  .stub.vert { background-image: linear-gradient(#b9b9b9, #b9b9b9), linear-gradient(#b9b9b9, #b9b9b9); background-size: 1px 100%, 5px 1px; background-position: 5px 0, 100% 50%; }
  .stub.half { background-image: linear-gradient(#b9b9b9, #b9b9b9), linear-gradient(#b9b9b9, #b9b9b9); background-size: 1px 50%, 5px 1px; background-position: 5px 0, 100% 50%; }
  .box { width: 3px; height: 3px; border: 1px solid #b3b9c3; background: linear-gradient(#6a7ab0, #6a7ab0) center / 3px 1px no-repeat, #fff; }
  .plus { background: linear-gradient(#6a7ab0, #6a7ab0) center / 3px 1px no-repeat, linear-gradient(#6a7ab0, #6a7ab0) center / 1px 3px no-repeat, #fff; }
  .vscroll { width: 9px; display: flex; flex-direction: column; background: #f1f1f1; }
  .vscroll svg, .hscroll svg { width: 9px; height: 9px; fill: none; stroke: #444; stroke-width: 1; flex: none; }
  .vscroll .track { flex: 1; padding-top: 8px; }
  .vscroll .thumb { height: 39%; background: #cdcdcd; }
  .hscroll { height: 9px; display: flex; background: #f1f1f1; margin-right: 9px; }
  .hscroll .track { flex: 1; }
  .hscroll .thumb { height: 9px; width: 55%; background: #cdcdcd; }
  .tabs { display: flex; height: 13px; gap: 3px; color: #3a4458; padding-left: 2px; }
  .tabs button { gap: 1px; padding: 0 1px; }
  .tabs .cur { background: #f3f5f9; }

  main { flex: 1; min-width: 0; position: relative; background: #fff; border-left: 1px solid #8d9096; border-top: 1px solid #8d9096; }
  .scene { display: block; width: 100%; height: 100%; overflow: hidden; }
  .axis { font: 6px "Liberation Sans", sans-serif; }
  .case { position: absolute; left: 3px; top: 1px; font: 6px/10px "Liberation Sans", sans-serif; color: #000; }
  .popup { position: absolute; left: 169px; top: -4px; width: 138px; padding: 1px 1px 2px; border: 1px solid #a3a8b0; background: linear-gradient(90deg, #e7ecf5 14px, #fbfbfb 14px); box-shadow: 1px 1px 1px #999; color: #24272d; }
  .popup button { width: 100%; height: 12px; justify-content: flex-start; gap: 5px; }
  .popup button:disabled { color: #a4a6ab; }
  .popup .icon { width: 11px; height: 11px; }
  .popup .hot { outline: 2px solid #f5110d; outline-offset: -1px; background: linear-gradient(#fff1c0, #ffe08c 45%, #fbc63c 55%, #fddc7c); }
  .rule { height: 1px; margin: 1px 0 2px 16px; background: #c4c6ca; }

  footer { display: flex; align-items: center; height: 12px; flex: none; background: linear-gradient(#eceff3, #b4bac5 35%, #a6adb9 70%, #bcc2cc); font-family: "Liberation Sans", sans-serif; }
  footer p { width: 325px; padding-left: 1px; flex: none; color: #22252b; }
  .cells { display: flex; gap: 1px; }
  .cells button { height: 10px; padding: 0 1px; border: 1px solid; border-color: #6e747f #d6dae0 #d6dae0 #6e747f; color: #22252b; }
</style>
